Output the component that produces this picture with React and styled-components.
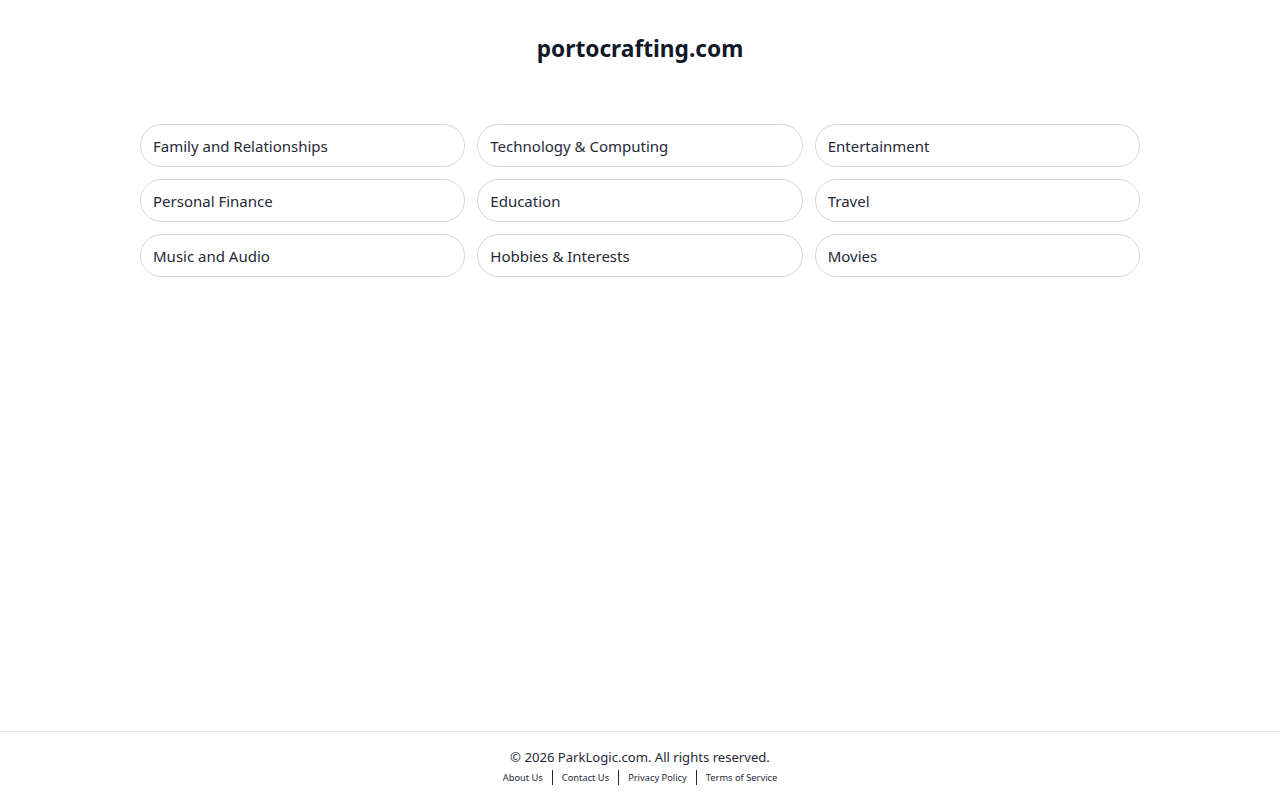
import React from 'react';
import styled, { createGlobalStyle } from 'styled-components';

const Global = createGlobalStyle`
  body {
    margin: 0;
    font-family: "Noto Sans", "Open Sans", sans-serif;
    color: #111827;
    background: #fff;
  }
`;

const Page = styled.div`
  min-height: 100vh;
  display: flex;
  flex-direction: column;
`;

const Main = styled.main`
  flex: 1;
  padding-top: 32px;
`;

const Title = styled.h1`
  margin: 0;
  text-align: center;
  font-size: 22.7px;
  font-weight: 700;
  line-height: 34px;
  color: #111827;
`;

const Grid = styled.div`
  width: 1000px;
  margin: 58px auto 0;
  display: grid;
  grid-template-columns: repeat(3, 1fr);
  gap: 12px;
`;

const Pill = styled.a`
  display: flex;
  align-items: center;
  height: 43px;
  box-sizing: border-box;
  padding: 0 12px;
  border: 1px solid #d1d5db;
  border-radius: 22px;
  font-size: 15px;
  color: #1f2937;
  text-decoration: none;
`;

const Footer = styled.footer`
  border-top: 1px solid #e5e7eb;
  height: 69px;
  box-sizing: border-box;
  padding-top: 15px;
  text-align: center;
`;

const Copy = styled.div`
  font-size: 13.1px;
  line-height: 20px;
  color: #1f2937;
`;

const Links = styled.div`
  display: flex;
  justify-content: center;
  align-items: center;
  margin-top: 3px;
`;

const FLink = styled.a`
  font-size: 9.3px;
  color: #1f2937;
  text-decoration: none;
  padding: 0 9px;
  line-height: 15px;
  & + & {
    border-left: 1.5px solid #1f2937;
  }
`;

const topics = [
  'Family and Relationships', 'Technology & Computing', 'Entertainment',
  'Personal Finance', 'Education', 'Travel',
  'Music and Audio', 'Hobbies & Interests', 'Movies',
];

export default function App() {
  return (
    <Page>
      <Global />
      <Main>
        <Title>portocrafting.com</Title>
        <Grid>
          {topics.map(t => <Pill key={t} href="#">{t}</Pill>)}
        </Grid>
      </Main>
      <Footer>
        <Copy>© 2026 ParkLogic.com. All rights reserved.</Copy>
        <Links>
          <FLink href="#">About Us</FLink>
          <FLink href="#">Contact Us</FLink>
          <FLink href="#">Privacy Policy</FLink>
          <FLink href="#">Terms of Service</FLink>
        </Links>
      </Footer>
    </Page>
  );
}
